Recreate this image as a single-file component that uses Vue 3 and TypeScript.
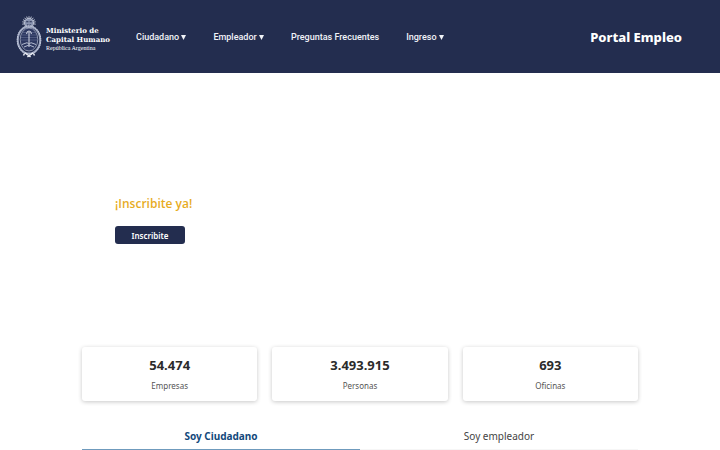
<script setup lang="ts">
interface NavItem {
  label: string
  menu: boolean
}
interface Stat {
  value: string
  label: string
}

const navItems: NavItem[] = [
  { label: 'Ciudadano', menu: true },
  { label: 'Empleador', menu: true },
  { label: 'Preguntas Frecuentes', menu: false },
  { label: 'Ingreso', menu: true },
]

const stats: Stat[] = [
  { value: '54.474', label: 'Empresas' },
  { value: '3.493.915', label: 'Personas' },
  { value: '693', label: 'Oficinas' },
]

// Angles of the sun's rays, fanned over the top of the emblem
const rays: number[] = [-100, -80, -60, -40, -20, 0, 20, 40, 60, 80, 100]
</script>

<template>
  <div class="page">
    <header class="header">
      <a class="brand" href="#">
        <svg class="emblem" viewBox="0 0 26 42" aria-hidden="true">
          <g stroke="#c4cadb" stroke-width="0.9" stroke-linecap="round">
            <line
              v-for="angle in rays"
              :key="angle"
              x1="13"
              y1="2.2"
              x2="13"
              y2="0.6"
              :transform="`rotate(${angle} 13 7)`"
            />
          </g>
          <circle cx="13" cy="7" r="4.6" fill="#8993b0" stroke="#c4cadb" stroke-width="0.8" />
          <path d="M10.2 5.8h2.2M13.6 5.8h2.2M11 8.6q2 1.2 4 0" stroke="#232d4f" stroke-width="1.1" fill="none" />
          <ellipse cx="13" cy="24" rx="11.2" ry="13.6" fill="none" stroke="#9ca5c0" stroke-width="2" />
          <ellipse cx="13" cy="24" rx="11.8" ry="14.2" fill="none" stroke="#d0d5e3" stroke-width="1" stroke-dasharray="1.4 1" />
          <ellipse cx="13" cy="23.5" rx="8.8" ry="11.5" fill="#2c3760" stroke="#b4bcd0" stroke-width="0.7" />
          <path d="M6.6 16.5h12.8M5.6 19h14.8M5 21.5h16M5 24h16" stroke="#5b678d" stroke-width="0.7" />
          <path d="M13 16v15M10.6 18q0-3 2.4-3t2.4 3" stroke="#d5d9e6" stroke-width="1" fill="none" />
          <path d="M6 28.5l5-1.8 2 1.3 2-1.3 5 1.8M8 31l5-2 5 2" stroke="#b4bcd0" stroke-width="1" fill="none" />
          <path d="M9 36.8l5.6 4.2M17 36.8l-5.6 4.2M8.5 37.5l-1 2M17.5 37.5l1 2" stroke="#e4e7ef" stroke-width="1.5" fill="none" />
        </svg>
        <span class="brand-text">
          <strong>Ministerio de</strong>
          <strong>Capital Humano</strong>
          <span class="country">República Argentina</span>
        </span>
      </a>
      <nav class="nav">
        <template v-for="item in navItems" :key="item.label">
          <button v-if="item.menu" class="nav-item" type="button">
            {{ item.label }}
            <svg class="caret" viewBox="0 0 5 5" aria-hidden="true"><path d="M0 0h5L2.5 5z" fill="currentColor" /></svg>
          </button>
          <a v-else class="nav-item" href="#">{{ item.label }}</a>
        </template>
      </nav>
      <a class="portal" href="#">Portal Empleo</a>
    </header>

    <main class="main">
      <section class="hero">
        <h1>¡Inscribite ya!</h1>
        <button class="signup" type="button">Inscribite</button>
      </section>

      <section class="stats">
        <article v-for="stat in stats" :key="stat.label" class="card">
          <strong class="value">{{ stat.value }}</strong>
          <span class="label">{{ stat.label }}</span>
        </article>
      </section>

      <div class="tabs" role="tablist">
        <button class="tab active" type="button" role="tab" aria-selected="true">Soy Ciudadano</button>
        <button class="tab" type="button" role="tab" aria-selected="false">Soy empleador</button>
      </div>
    </main>
  </div>
</template>

<style>
body {
  background: #fff;
}
</style>

<style scoped>
.page {
  height: 100vh;
  overflow: hidden;
  font-family: 'Noto Sans', 'Open Sans', sans-serif;
  color: #2b2b2b;
}
.page * {
  box-sizing: border-box;
}
button {
  border: 0;
  padding: 0;
  background: none;
  font-family: inherit;
}
a {
  color: inherit;
  text-decoration: none;
}
.header {
  display: flex;
  align-items: center;
  height: 73px;
  padding: 0 38px 0 16px;
  background: #232d4f;
  color: #fff;
}
.brand {
  display: flex;
  align-items: center;
  gap: 4px;
  width: 120px;
}
.emblem {
  width: 26px;
  height: 42px;
  flex: none;
}
.brand-text {
  display: flex;
  flex-direction: column;
  padding-top: 6px;
  font-family: 'DejaVu Serif', serif;
  font-size: 7px;
  line-height: 9px;
  white-space: nowrap;
}
.country {
  font-family: 'Liberation Serif', serif;
  font-size: 6px;
}
.nav {
  display: flex;
  gap: 27px;
}
.nav-item {
  color: #f1f3f8;
  font-family: Roboto, sans-serif;
  font-size: 9px;
  font-weight: 500;
  line-height: 18px;
  white-space: nowrap;
}
.caret {
  width: 5px;
  height: 5px;
}
.portal {
  margin-left: auto;
  font-size: 13px;
  font-weight: 800;
  line-height: 20px;
  white-space: nowrap;
}
.main {
  padding: 0 82px;
}
.hero {
  display: flex;
  flex-direction: column;
  align-items: flex-start;
  gap: 12px;
  padding: 120px 33px 103px;
}
h1 {
  margin: 0;
  color: #e7ac1f;
  font-family: 'Open Sans', sans-serif;
  font-size: 12px;
  font-weight: 600;
  line-height: 21px;
}
.signup {
  width: 70px;
  height: 18px;
  border-radius: 3px;
  background: #232d4f;
  color: #fff;
  font-size: 8px;
  font-weight: 600;
}
.stats {
  display: grid;
  grid-template-columns: repeat(3, 1fr);
  gap: 15px;
}
.card {
  display: flex;
  flex-direction: column;
  align-items: center;
  gap: 4px;
  padding: 8px 0;
  border-radius: 3px;
  background: #fff;
  box-shadow: 0 1px 4px rgba(0, 0, 0, 0.22);
}
.value {
  font-size: 13px;
  line-height: 20px;
}
.label {
  color: #555;
  font-size: 8px;
  line-height: 14px;
}
.tabs {
  display: grid;
  grid-template-columns: 1fr 1fr;
  margin-top: 24px;
}
.tab {
  padding: 1px 0 2px;
  border-bottom: 2px solid #f6f6f6;
  color: #444;
  font-size: 10px;
  line-height: 21px;
}
.tab.active {
  border-bottom-color: #6f9bbd;
  color: #13497b;
  font-weight: 700;
}
</style>
